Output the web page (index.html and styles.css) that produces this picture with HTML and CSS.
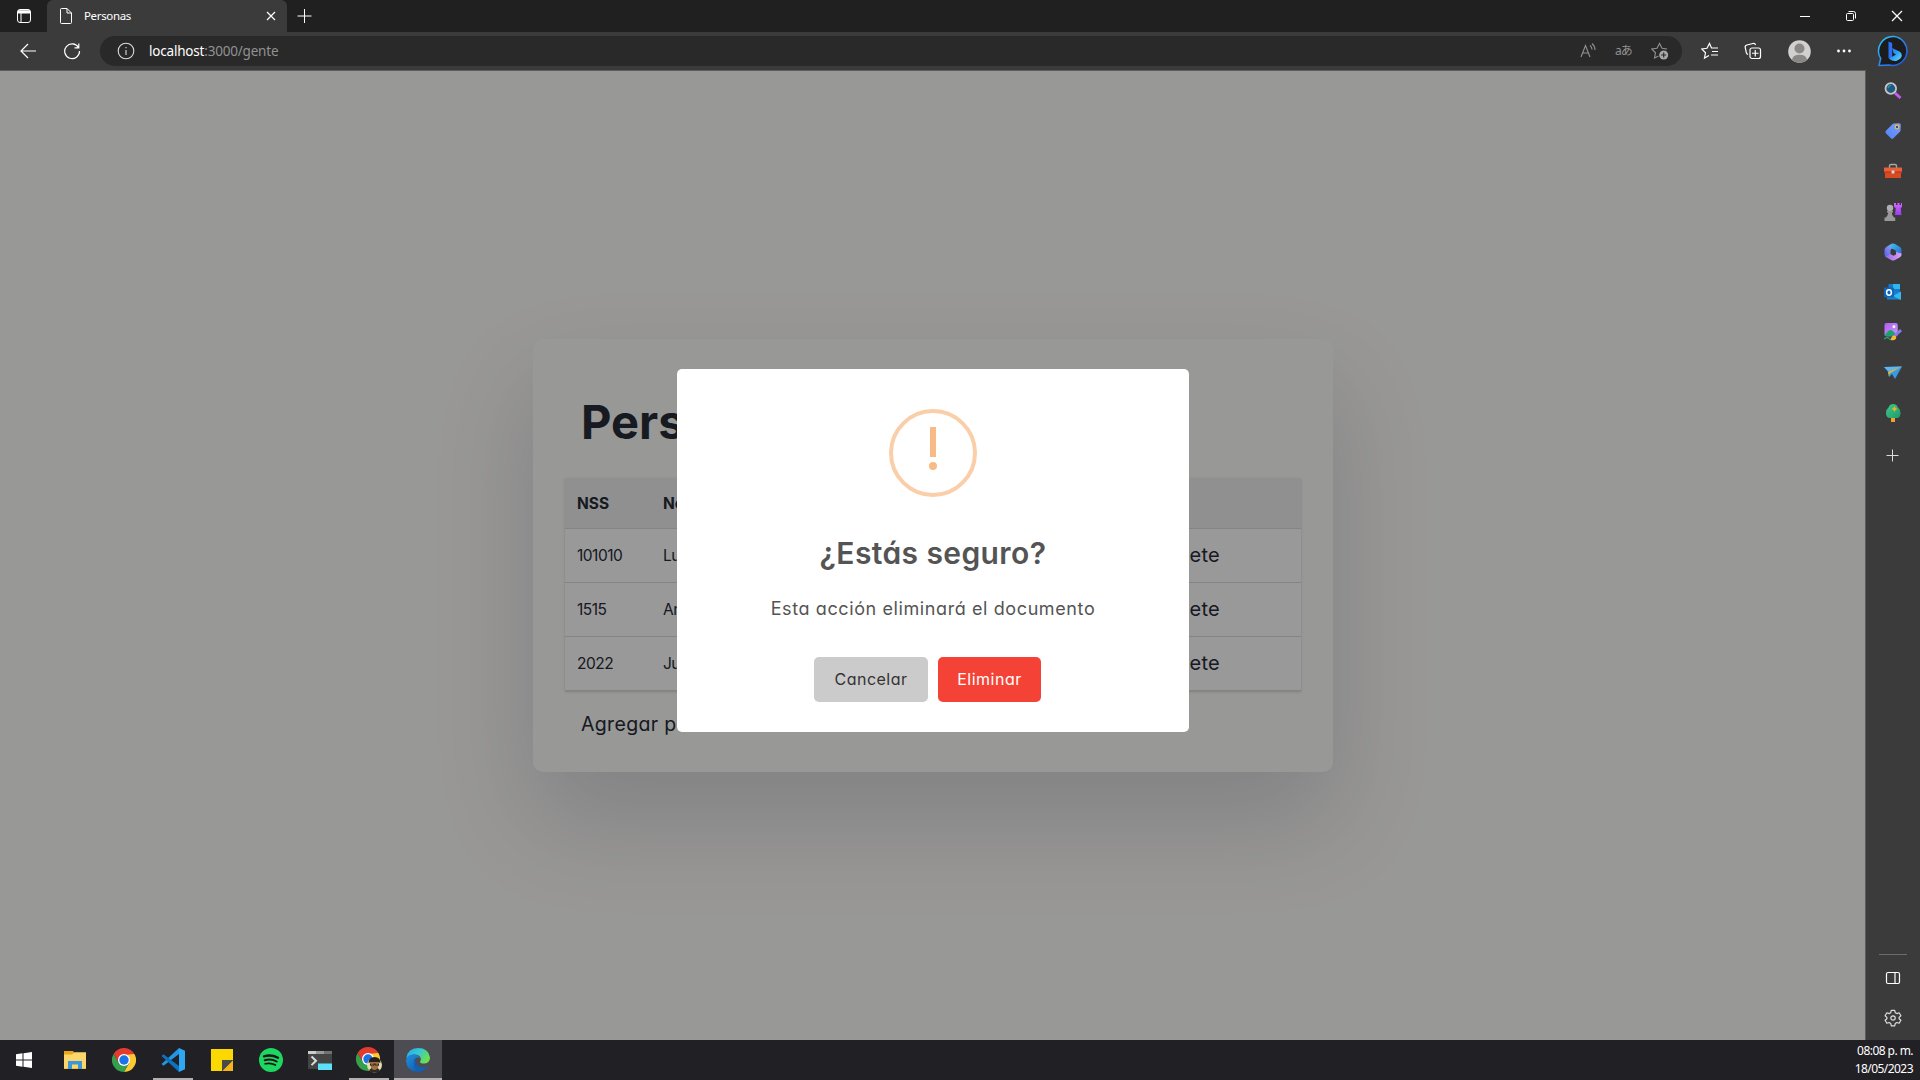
FILE: index.html
```html
<!DOCTYPE html>
<html lang="es">
<head>
<meta charset="utf-8">
<title>Personas</title>
<link rel="stylesheet" href="styles.css">
</head>
<body>
<svg class="defs" width="0" height="0" aria-hidden="true">
  <defs>
    <linearGradient id="bing" x1="0" y1="0" x2="1" y2="1"><stop offset="0" stop-color="#2ccff0"/><stop offset=".6" stop-color="#2b7cf0"/><stop offset="1" stop-color="#1d4fd8"/></linearGradient>
    <linearGradient id="bingb" x1="0" y1="0" x2="1" y2="1"><stop offset="0" stop-color="#2a6af0"/><stop offset=".5" stop-color="#2f9df5"/><stop offset="1" stop-color="#5be5f5"/></linearGradient>
    <linearGradient id="tag" x1="0" y1="1" x2="1" y2="0"><stop offset="0" stop-color="#4f86f5"/><stop offset="1" stop-color="#7b9bff"/></linearGradient>
    <linearGradient id="rook" x1="0" y1="0" x2="0" y2="1"><stop offset="0" stop-color="#d266ff"/><stop offset="1" stop-color="#9a3df0"/></linearGradient>
    <linearGradient id="m365a" x1="0" y1="1" x2="1" y2="0"><stop offset="0" stop-color="#5a5ce0"/><stop offset="1" stop-color="#9db4ff"/></linearGradient>
    <linearGradient id="m365b" x1="0" y1="0" x2="1" y2="1"><stop offset="0" stop-color="#37c6f0"/><stop offset="1" stop-color="#2a5fd0"/></linearGradient>
    <linearGradient id="m365c" x1="0" y1="0" x2="1" y2="0"><stop offset="0" stop-color="#8f6be8"/><stop offset="1" stop-color="#e0a0f0"/></linearGradient>
    <linearGradient id="edgetop" x1="0" y1="0" x2="1" y2=".5"><stop offset="0" stop-color="#2aa7e8"/><stop offset=".5" stop-color="#35c6d8"/><stop offset="1" stop-color="#6be04e"/></linearGradient>
    <linearGradient id="edgelow" x1="0" y1="0" x2="1" y2="1"><stop offset="0" stop-color="#1f8fe0"/><stop offset="1" stop-color="#0d4f9e"/></linearGradient>
    <linearGradient id="picture" x1="0" y1="0" x2="1" y2="1"><stop offset="0" stop-color="#b35cf0"/><stop offset="1" stop-color="#c79af8"/></linearGradient>
    <linearGradient id="tree" x1="0" y1="0" x2="1" y2="1"><stop offset="0" stop-color="#3ec98a"/><stop offset="1" stop-color="#1f9a6a"/></linearGradient>
    <symbol id="chrome" viewBox="0 0 24 24">
      <path d="M12 12 1.6 6A12 12 0 0 1 22.4 6Z" fill="#e33b2e"/>
      <path d="M22.4 6A12 12 0 0 1 12 24L17 15 12 6Z" fill="#fcc934"/>
      <path d="M1.6 6A12 12 0 0 0 12 24L17.2 15H7Z" fill="#34a04c"/>
      <path d="M1.6 6H22.4L12 7Z" fill="#e33b2e"/>
      <path d="M1.6 6 7 15 12 6Z" fill="#e33b2e"/>
      <circle cx="12" cy="12" r="6" fill="#fff"/><circle cx="12" cy="12" r="4.7" fill="#1a73e8"/>
    </symbol>
  </defs>
</svg>

<header class="tabs">
  <div class="tab-actions">
    <svg width="16" height="16" viewBox="0 0 16 16" fill="none" stroke="#fff"><rect x="1.5" y="1.5" width="13" height="13" rx="2.5"/><path d="M2 3.2h12M2 4.5h12" stroke-width="2"/><path d="M5 5v9"/></svg>
  </div>
  <div class="tab">
    <svg width="14" height="18" viewBox="0 0 14 18" fill="none" stroke="#fff"><path d="M1.5 2.5a1 1 0 0 1 1-1H8l4.500 4.500V15.500a1 1 0 0 1-1 1h-9a1 1 0 0 1-1-1ZM8 1.500V6h4.500"/></svg>
    <span class="tab-title">Personas</span>
    <svg width="10" height="10" viewBox="0 0 10 10" stroke="#fff" stroke-width="1.200"><path d="m1 1 8 8M9 1 1 9"/></svg>
  </div>
  <svg class="new-tab" width="16" height="16" viewBox="0 0 16 16" stroke="#fff"><path d="M8.500 1v14M1.500 8h14"/></svg>
  <div class="window-controls">
    <svg width="12" height="12" viewBox="0 0 12 12" stroke="#fff"><path d="M1 6.500h10"/></svg>
    <svg width="12" height="12" viewBox="0 0 12 12" fill="none" stroke="#fff"><rect x="1.500" y="3.500" width="7" height="7" rx="1"/><path d="M3.500 1.500h5a2 2 0 0 1 2 2v5"/></svg>
    <svg width="12" height="12" viewBox="0 0 12 12" stroke="#fff" stroke-width="1.200"><path d="m1 1 10 10M11 1 1 11"/></svg>
  </div>
</header>

<nav class="toolbar">
  <div class="nav-buttons">
    <svg width="18" height="18" viewBox="0 0 18 18" fill="none" stroke="#fff" stroke-width="1.200"><path d="M17 9H2M9 2 2 9l7 7"/></svg>
    <svg width="18" height="18" viewBox="0 0 18 18" fill="none" stroke="#fff" stroke-width="1.200"><path d="M15.500 5.500A7.400 7.400 0 1 0 16.500 9M15.800 1.500v4.300h-4.300"/></svg>
  </div>
  <div class="address">
    <svg width="18" height="18" viewBox="0 0 18 18" fill="none" stroke="#ddd" stroke-width="1.100"><circle cx="9" cy="9" r="7.800"/><path d="M9 8v5M9 5v1.300"/></svg>
    <span class="url"><b>localhost</b>:3000/gente</span>
    <div class="address-actions">
      <svg width="18" height="18" viewBox="0 0 18 18" fill="none" stroke="#919191" stroke-width="1.100"><path d="m2 15 4.500-11.500L11 15M3.500 11h6M11 3.500q2 1.500 2 4M13 1.500q3 2.500 3 6.500"/></svg>
      <span class="translate">aあ</span>
      <svg width="18" height="18" viewBox="0 0 18 18" fill="none" stroke="#919191" stroke-width="1.100"><path d="M16 7 11 6.300 8.500 1.500 6 6.300.800 7l3.700 3.800-1 5.200 4-2"/><circle cx="12.700" cy="13" r="4.500" fill="#a8a8a8" stroke="none"/><path d="M12.700 10.500v5M10.200 13h5" stroke="#292929"/></svg>
    </div>
  </div>
  <div class="tools">
    <svg width="18" height="18" viewBox="0 0 18 18" fill="none" stroke="#fff" stroke-width="1.200"><path d="M12 6H10.500L8.500 1.500 6 6.300.800 7l3.700 3.800-1 5.200 4.500-2.500M11.500 6H17M11 9.500h6M10 13h7"/></svg>
    <svg width="18" height="18" viewBox="0 0 18 18" fill="none" stroke="#fff" stroke-width="1.200"><rect x="6" y="6" width="10.500" height="10.500" rx="2"/><path d="M11.250 8v6.500M8 11.250h6.500M4 12.500Q2.700 12 2.300 10.500L1.200 5.500Q.9 3.500 2.800 3L9 1.500Q11 1.200 11.600 3"/></svg>
    <svg width="23" height="23" viewBox="0 0 23 23"><circle cx="11.500" cy="11.500" r="11.300" fill="#d2d0ce"/><circle cx="11.500" cy="8.500" r="5" fill="#8a8886"/><path d="M4 20Q4.500 14.700 11.500 14.700T19 20A11.300 11.300 0 0 1 4 20" fill="#8a8886"/></svg>
    <svg width="16" height="16" viewBox="0 0 16 16" fill="#fff"><circle cx="2.500" cy="8" r="1.400"/><circle cx="8" cy="8" r="1.400"/><circle cx="13.500" cy="8" r="1.400"/></svg>
    <svg class="bing" width="32" height="32" viewBox="0 0 32 32"><path d="M17 1.500A14.500 14.500 0 1 1 12 30L2 30.500 3.700 23.500A14.500 14.500 0 0 1 17 1.500Z" fill="#1c1c1e" stroke="url(#bing)" stroke-width="1.500"/><path d="m11.500 6.500 3.700 1.500v13.200l-1.500 3.500-2.200-2Z" fill="#2b70f0"/><path d="m15 13 7.500 3.500q2.500 1.500 2.300 4.200-.3 2.800-5 5Q16 27 12 23.500l7-4-2.500-1.500Z" fill="url(#bingb)"/></svg>
  </div>
</nav>

<main class="window">
  <section class="page">
    <div class="card">
      <h1>Personas</h1>
      <table class="people">
        <thead><tr><th class="col-nss">NSS</th><th>Nombre</th><th class="col-action"></th></tr></thead>
        <tbody>
          <tr><td>101010</td><td>Luis</td><td class="delete">Delete</td></tr>
          <tr><td>1515</td><td>Ana</td><td class="delete">Delete</td></tr>
          <tr><td>2022</td><td>Juan</td><td class="delete">Delete</td></tr>
        </tbody>
      </table>
      <a class="add">Agregar persona</a>
    </div>
    <div class="overlay">
      <div class="modal" role="dialog">
        <div class="warning"><i class="bar"></i><i class="dot"></i></div>
        <h2>¿Estás seguro?</h2>
        <p>Esta acción eliminará el documento</p>
        <div class="buttons">
          <button class="cancel">Cancelar</button>
          <button class="confirm">Eliminar</button>
        </div>
      </div>
    </div>
  </section>

  <aside class="sidebar">
    <div class="apps">
      <svg viewBox="0 0 18 18"><path d="m11 11 5.500 5" stroke="#c956f5" stroke-width="3"/><circle cx="6.800" cy="6.500" r="5.300" fill="#1f5a80" stroke="#c4c4c4" stroke-width="1.800"/><path d="M4 6q.5-2.500 3-2.800" stroke="#3f9ac0" fill="none"/></svg>
      <svg viewBox="0 0 18 18"><path d="M9.500 1.500 15 1.200q1.800 0 1.800 1.800l-.3 5.500q0 .7-.6 1.300l-6.500 6.500q-1.200 1.200-2.500 0l-5-5q-1.200-1.200 0-2.500l6.500-6.600q.5-.6 1.100-.7Z" fill="url(#tag)"/><circle cx="13" cy="5" r="1.800" fill="#3c4a90" stroke="#f2c230" stroke-width="1.200"/></svg>
      <svg viewBox="0 0 18 18"><path d="M5.500 6V4q0-1.500 1.500-1.500h4q1.500 0 1.500 1.500v2" fill="none" stroke="#a8a8a8" stroke-width="1.400"/><path d="M0 5.500h18v5H0Z" fill="#e8613a"/><path d="M1 10h16v6H1Z" fill="#d84a20"/><path d="M0 10h18" stroke="#a63618"/><circle cx="9" cy="10" r="1.700" fill="#d5d5d5"/></svg>
      <svg viewBox="0 0 18 18"><path d="M10 0h2v2h1.500V0h2v2H17V0h1v4l-1.300 1 .8 7H11l.8-7L10 4Z" fill="url(#rook)"/><circle cx="6" cy="5" r="3.200" fill="#b0b0b0"/><path d="M3 8h6v1.500H7.800q0 3 2.200 5h1.200V18H.5v-3.500H2q2.200-2 2.200-5H3Z" fill="#999"/></svg>
      <svg viewBox="0 0 18 18"><path d="M8 .5 2.500 3.800Q.5 5 .5 7v4.500q0 1.500 1.500 2.800L6.500 12V7.500q0-1 1-1.700l4-2.500Z" fill="url(#m365a)"/><path d="M7 1.500Q9 0 11 1l5 3q1.500 1 1.500 2.700v6L12 9.500 11.500 7.300 6.500 5Z" fill="url(#m365b)"/><path d="m1.500 13.800 5-2.800 3 1.800 2.500-1.300V9l5.500 1.500V11.500q0 1.700-1.500 2.700l-5.500 3q-1.500.8-3 0Z" fill="url(#m365c)"/></svg>
      <svg viewBox="0 0 18 18"><path d="M4.500 1h11.500v10H4.500Z" fill="#1678c8"/><path d="M9 1h7v5H9Z" fill="#32b4ef"/><path d="M3 8.500 17 9v7.500H3Z" fill="#1a82cc"/><path d="m17 8.500-8 4.500 8 4Z" fill="#36b6f2"/><rect y="4.500" width="10" height="10" rx="1" fill="#0f65b8"/><ellipse cx="5" cy="9.500" rx="2.400" ry="2.700" fill="none" stroke="#fff" stroke-width="1.500"/></svg>
      <svg viewBox="0 0 19 19"><rect x=".5" width="14" height="14" rx="2" fill="url(#picture)"/><circle cx="10.500" cy="4" r="1.500" fill="#fff"/><path d="M1 12.500 5 8q1.800-1.200 3.500 0L14 13l-1 1H2Z" fill="#19a36b"/><path d="M0 17q4-3 6 0 2 1.500 4-1" stroke="#22a874" stroke-width="1.300" fill="none"/><path d="m10 14.500 8-7" stroke="#877ae8" stroke-width="3"/><path d="M7 18q1-5 4-4.500t1.500 3Q11.500 18.500 7 18" fill="#f7b82e"/></svg>
      <svg viewBox="0 0 18 18"><path d="M0 4 18 3.500 11 16 8 11 5 14 4.500 9.500Z" fill="#359be8"/><path d="M0 4 18 3.500 5 8.500Z" fill="#60b6ef"/><path d="M4 9 18 3.500 5.500 10.500 5 14Z" fill="#f3b629"/></svg>
      <svg viewBox="0 0 18 18"><path d="M7 12h4v6H7Z" fill="#f2a22a"/><path d="M9.200 0q3.300 0 4.600 3.300 2.700 2 2.700 6Q16.500 13.500 13.500 14h-8Q2 13.500 2 9.300q0-4 2.700-6Q6 0 9.200 0" fill="url(#tree)"/><path d="m10.500 2 1 2 2 1-2 1-1 2-1-2-2-1 2-1Z" fill="#f5b128"/></svg>
      <svg class="plus" viewBox="0 0 18 18" stroke="#ddd"><path d="M8.500 2.500v12M2.500 8.500h12"/></svg>
    </div>
    <div class="side-tools">
      <svg viewBox="0 0 18 18" fill="none" stroke="#fff" stroke-width="1.200"><rect x="2.500" y="3.500" width="13" height="11" rx="1.500"/><path d="M11 4v10"/></svg>
      <svg viewBox="0 0 18 18" fill="none" stroke="#ddd" stroke-width="1.200"><path d="m7.300 1.300 3.400 0 .6 2.400 1.500.9 2.300-.8 1.800 3-1.800 1.600v1.300l1.800 1.600-1.800 3-2.300-.8-1.500.9-.6 2.400H7.300l-.6-2.400-1.500-.9-2.300.8-1.800-3 1.800-1.600V8.400L1.100 6.800l1.800-3 2.300.8 1.500-.9Z" stroke-linejoin="round"/><circle cx="9" cy="9" r="2.200"/></svg>
    </div>
  </aside>
</main>

<footer class="taskbar">
  <div class="task start"><svg width="16" height="16" viewBox="0 0 16 16" fill="#fff"><path d="M0 2.200 6.500 1.300V7.500H0ZM7.500 1.200 16 0V7.500H7.500ZM0 8.500h6.500v6.200L0 13.800ZM7.500 8.500H16V16l-8.500-1.200Z"/></svg></div>
  <div class="task"><svg width="22" height="18" viewBox="0 0 22 18"><path d="M0 0h9l1.500 2H22v16H0Z" fill="#e6a817"/><path d="M0 3.500h8L10.500 1.200H22V17.500H0Z" fill="#fcd56c"/><path d="M4 18V10h14v8h-4v-4.500H8V18Z" fill="#3a99d9"/></svg></div>
  <div class="task"><svg width="24" height="24"><use href="#chrome"/></svg></div>
  <div class="task open"><svg width="24" height="24" viewBox="0 0 24 24"><path d="M18 0 24 2.800V21.200L18 24Z" fill="#2fa8f2"/><path d="m18 0-17.500 16 2 1.800L18 6Z" fill="#2196e3"/><path d="m.5 8 2-1.800L18 18v6Z" fill="#0f72bd"/></svg></div>
  <div class="task"><svg width="22" height="22" viewBox="0 0 22 22"><path d="M0 0h22v11H11v11H0Z" fill="#fcd802"/><path d="M22 11V22H11Z" fill="#f3b41c"/><path d="M11 11H22L11 22Z" fill="#4a4a4a"/></svg></div>
  <div class="task"><svg width="24" height="24" viewBox="0 0 24 24" fill="none" stroke="#161616" stroke-linecap="round"><circle cx="12" cy="12" r="12" fill="#1ed760" stroke="none"/><path d="M5 8.300q7.500-2 14 1.500" stroke-width="2.400"/><path d="M5.700 12.200q6.500-1.800 12 1.300" stroke-width="2"/><path d="M6.200 15.800q5.500-1.400 10.200 1.200" stroke-width="1.700"/></svg></div>
  <div class="task"><svg width="24" height="19" viewBox="0 0 24 19"><rect width="24" height="18" fill="#444"/><path d="M0 0h8v3H0Z" fill="#ccc"/><path d="M8 0h8v3H8Z" fill="#999"/><path d="M16 0h8v3h-8Z" fill="#727272"/><path d="m3.500 5.500 4.500 4.300-4.500 4.300" fill="none" stroke="#ddd" stroke-width="2"/><path d="M10 12.500h14V19H10Z" fill="#5ce1fa"/></svg></div>
  <div class="task open"><svg width="26" height="26" viewBox="0 0 26 26"><svg width="24" height="24"><use href="#chrome"/></svg><circle cx="18.500" cy="18" r="7.500" fill="#e3dcae"/><path d="M13 24q2-4 5.500-4t5.500 4q-5 3-11 0" fill="#2c2b24"/><path d="M14.500 14h8v5q-1 4-4 4t-4-4Z" fill="#a66f4c"/><path d="M12.500 16q0-6 6-6t6 6l-3-1h-6Z" fill="#25201c"/><path d="M14 16.500h9v2h-4l-.5-1-.5 1h-4Z" fill="#292117"/><path d="M15 17h2.500M19.500 17H22" stroke="#d49426"/></svg></div>
  <div class="task active"><svg width="24" height="24" viewBox="0 0 24 24"><path d="M.3 10.500Q1.500 0 12 0t12 9.500q0 6-6.500 6-3.500 0-3.500-2 1.500-1.500.5-4Q13 6.500 8.500 6.500q-5 0-8.200 4" fill="url(#edgetop)"/><path d="M0 13.500Q0 8 5.500 6.800T14.500 10q-5-2-6.500 3-1 6 5 8.500t9.500-3.200Q19 24 12 24 1 23.500 0 13.500" fill="url(#edgelow)"/><path d="M8 13.500q-1.500 8 6 9.500 5-.5 8.800-4.800-5 2.500-9.300.3-4-2-3.500-6.500Z" fill="#145fae"/></svg></div>
  <div class="clock"><span>08:08 p. m.</span><span>18/05/2023</span></div>
</footer>
</body>
</html>
```
FILE: styles.css
```css
* { box-sizing: border-box; }

body {
  margin: 0;
  width: 1920px;
  height: 1080px;
  overflow: hidden;
  display: grid;
  grid-template-rows: 32px 38px 970px 40px;
  font-family: "Noto Sans", "Open Sans", sans-serif;
  color: #fff;
  background: #3b3b3b;
}

svg { display: block; flex: none; }
.defs { position: absolute; }

/* Browser chrome */
.tabs { display: flex; align-items: center; background: #202020; }
.tab-actions { width: 47px; display: grid; place-items: center; }
.tab {
  width: 240px;
  height: 32px;
  padding: 0 11px 0 12px;
  display: flex;
  align-items: center;
  background: #3b3b3b;
  border-radius: 6px 6px 0 0;
}
.tab-title { flex: 1; margin-left: 11px; padding-bottom: 2px; font-size: 11.500px; letter-spacing: -0.35px; }
.new-tab { margin-left: 9px; }
.window-controls { margin-left: auto; padding-right: 17px; display: flex; gap: 34px; }

.toolbar { display: flex; align-items: center; background: #3b3b3b; }
.nav-buttons { width: 100px; padding-left: 19px; display: flex; gap: 26px; }
.address {
  width: 1582px;
  height: 30px;
  padding: 0 13px 0 17px;
  display: flex;
  align-items: center;
  background: #292929;
  border-radius: 15px;
}
.url { margin-left: 14px; font-size: 13.500px; letter-spacing: -0.2px; color: #919191; }
.url b { font-weight: 400; color: #fff; }
.address-actions { margin-left: auto; display: flex; align-items: center; gap: 18px; }
.translate { width: 18px; font: 12px/18px "Noto Sans", "Noto Sans CJK JP", sans-serif; color: #919191; white-space: nowrap; letter-spacing: -1px; }
.tools { flex: 1; padding: 0 11px 0 19px; display: flex; align-items: center; justify-content: space-between; }

.window { display: grid; grid-template-columns: 1866px 54px; min-height: 0; }

/* Web page */
.page {
  position: relative;
  display: grid;
  place-items: center;
  padding-left: 1px;
  border-top: 1px solid #5c5c5c;
  border-right: 1px solid #5c5c5c;
  background: #fefdfa;
  color: #272c38;
  font-family: Inter, sans-serif;
  font-feature-settings: "cv11", "ss03";
  overflow: hidden;
}
.card {
  width: 800px;
  height: 433px;
  padding: 47px 32px 0;
  border-radius: 10px;
  background: #fefdfa;
  box-shadow: 0 48px 100px 0 rgba(24, 22, 62, .155);
}
h1 { margin: 0 0 20px 16px; font-size: 47px; line-height: 72px; font-weight: 700; letter-spacing: 0; }
.people {
  width: 736px;
  border-collapse: collapse;
  table-layout: fixed;
  background: #fff;
  box-shadow: 0 1px 3px rgba(0, 0, 0, .1), 0 1px 2px rgba(0, 0, 0, .08);
}
.people th, .people td { padding: 0 12px; text-align: left; font-size: 15.500px; border-bottom: 1px solid #dcdcde; }
.people th { height: 50px; padding-top: 2px; font-weight: 700; background: #f1f1f2; }
.people td { height: 54px; letter-spacing: -0.5px; }
.people .col-nss { width: 86px; }
.people .col-action { width: 174px; }
.people .delete { padding-right: 81px; font-size: 20px; letter-spacing: 0.3px; text-align: right; }
.add { display: block; margin: 18px 0 0 16px; font-size: 19.500px; line-height: 30px; letter-spacing: 0.35px; }

.overlay {
  position: absolute;
  inset: 0 -1px 0 0;
  padding-bottom: 10px;
  display: grid;
  place-items: center;
  background: rgba(0, 0, 0, .4);
}
.modal {
  width: 512px;
  height: 363px;
  padding-top: 40px;
  display: flex;
  flex-direction: column;
  align-items: center;
  background: #fff;
  border-radius: 5px;
  color: #545454;
}
.warning {
  width: 88px;
  height: 88px;
  padding-top: 14px;
  display: flex;
  flex-direction: column;
  align-items: center;
  gap: 5px;
  border: 4px solid #facea8;
  border-radius: 50%;
}
.warning .bar { width: 6px; height: 30px; background: #f8bb86; }
.warning .dot { width: 8px; height: 8px; border-radius: 50%; background: #f8bb86; }
h2 { margin: 34px 0 0; font-size: 30px; line-height: 45px; font-weight: 600; letter-spacing: 0.4px; }
.modal p { margin: 19px 0 0; font-size: 18px; line-height: 27px; letter-spacing: 0.6px; }
.buttons { margin: 35px 11px 0 0; display: flex; gap: 10px; }
.buttons button {
  height: 45px;
  padding: 0 0 2px;
  border: 0;
  border-radius: 5px;
  font: 16px Inter, sans-serif;
  font-feature-settings: "cv11", "ss03";
  letter-spacing: 0.5px;
}
.cancel { width: 114px; background: #cbcbcb; color: #333; }
.confirm { width: 103px; background: #f44336; color: #fff; }

/* Browser side panel */
.sidebar { padding: 12px 0 13px; display: flex; flex-direction: column; justify-content: space-between; align-items: center; }
.sidebar svg { width: 18px; height: 18px; }
.apps { display: flex; flex-direction: column; gap: 22.200px; }
.apps .plus { margin-top: 3px; }
.side-tools { width: 28px; padding-top: 14px; border-top: 1px solid #6b6b6b; display: flex; flex-direction: column; align-items: center; gap: 22px; }

/* Desktop taskbar */
.taskbar { display: flex; gap: 1px; background: #212025; }
.task { width: 48px; height: 40px; display: grid; place-items: center; }
.task.start { margin-right: 2px; }
.task.open { background: linear-gradient(#b4b0b1, #b4b0b1) center bottom / 40px 2px no-repeat; }
.task.active { background: #4d4c52; border-bottom: 2px solid #b4b0b1; padding-top: 2px; }
.clock { margin-left: auto; padding: 2px 7px 0 0; display: flex; flex-direction: column; align-items: flex-end; font-size: 12px; line-height: 18px; letter-spacing: -0.55px; }
```
